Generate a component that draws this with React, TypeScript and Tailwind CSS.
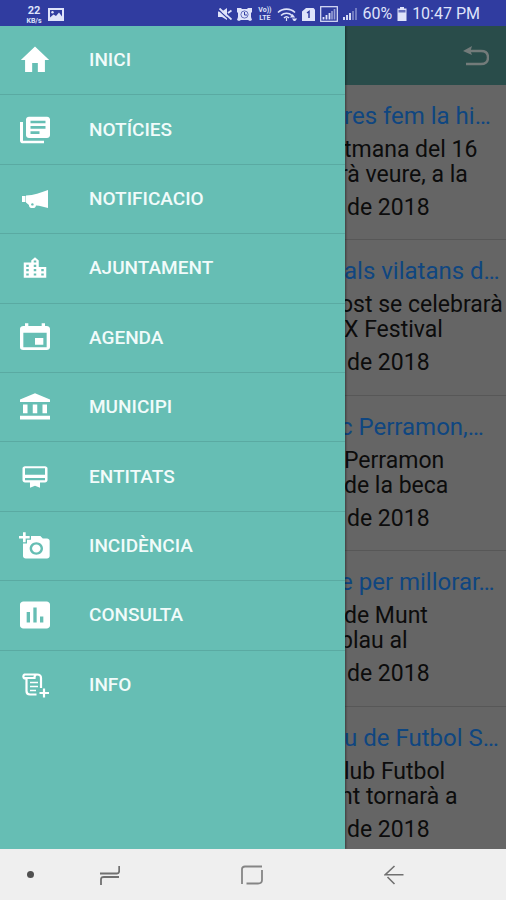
import type { ReactNode } from "react";
import {
  MdAccountBalance,
  MdAddAPhoto,
  MdAssessment,
  MdCardMembership,
  MdEvent,
  MdHome,
  MdLibraryBooks,
  MdLocationCity,
} from "react-icons/md";

function Megaphone() {
  return (
    <svg viewBox="0 0 26 18" className="h-[18px] w-[26px]" fill="currentColor" aria-hidden="true">
      <path d="M0 6h3.500v6H0zM4 5.600C12 5 18 3 26 0v18c-4-1.200-8-2.200-12-2.500A3.500 3 0 0 1 7 15L4 12.500z" />
      <circle cx="10.400" cy="14.400" r="1.200" className="fill-[#66beb4]" />
    </svg>
  );
}

function ScrollPlus() {
  return (
    <svg viewBox="0 0 28 25" className="h-[25px] w-7" fill="none" stroke="currentColor" strokeWidth="2.200" aria-hidden="true">
      <path d="M4.500 5.500H3.500a2 2.200 0 0 1 0-4H16c2.500 0 4 1 4 3.500V15M3 5h10.500c0-2 .5-3.500 2.500-3.500M5.500 5.500V18c0 2.500 1 3.500 3.500 3.500h6.500" />
      <path d="M9 9.500h8M9 13.500h8M9 17.500h6" strokeWidth="1.600" />
      <path d="M23 15.500v9M18.500 20H28" />
    </svg>
  );
}

const stretch = { preserveAspectRatio: "none", "aria-hidden": true } as const;

const menu: { label: string; icon: ReactNode }[] = [
  { label: "INICI", icon: <MdHome {...stretch} className="h-9 w-[34px]" /> },
  { label: "NOTÍCIES", icon: <MdLibraryBooks {...stretch} className="h-8 w-9" /> },
  { label: "NOTIFICACIO", icon: <Megaphone /> },
  { label: "AJUNTAMENT", icon: <MdLocationCity {...stretch} className="h-[26px] w-[30px]" /> },
  { label: "AGENDA", icon: <MdEvent {...stretch} className="h-8 w-10" /> },
  { label: "MUNICIPI", icon: <MdAccountBalance {...stretch} className="h-[30px] w-9" /> },
  { label: "ENTITATS", icon: <MdCardMembership {...stretch} className="h-[26px] w-[30px]" /> },
  { label: "INCIDÈNCIA", icon: <MdAddAPhoto {...stretch} className="h-[30px] w-8" /> },
  { label: "CONSULTA", icon: <MdAssessment {...stretch} className="h-9 w-10" /> },
  { label: "INFO", icon: <ScrollPlus /> },
];

const near = "pl-[344px]";
const under = "pl-[340px]";

const news = [
  { title: "res fem la hi…", titlePad: near, lines: [["tmana del 16", near], ["rà veure, a la", under]] },
  { title: "als vilatans d…", titlePad: near, lines: [["ost se celebrarà", under], ["X Festival", near]] },
  { title: "c Perramon,…", titlePad: under, lines: [["Perramon", near], ["de la beca", near]] },
  { title: "e per millorar…", titlePad: under, lines: [["de Munt", near], ["blau al", under]] },
  { title: "u de Futbol S…", titlePad: near, lines: [["lub Futbol", near], ["nt tornarà a", under]] },
];

function StatusBar() {
  return (
    <header className="flex h-[26px] shrink-0 items-center bg-[#303ca0] pt-[2px] pr-[26px] pl-[25px] text-[#dfe3fa]">
      <div className="w-[18px] text-center font-bold">
        <div className="text-[11px] leading-[13px]">22</div>
        <div className="text-[7px] leading-[8px]">KB/s</div>
      </div>
      <svg viewBox="0 0 16 13" className="ml-[5px] h-[13px] w-4" aria-hidden="true">
        <rect x="1" y="1" width="14" height="11" fill="none" stroke="currentColor" strokeWidth="2" />
        <path d="M2 11V9.500l3.500-3L8 8l3-3.500 3 4V11z" fill="currentColor" />
        <circle cx="4.500" cy="4.200" r="1.200" fill="currentColor" />
      </svg>
      <div className="ml-auto flex items-center gap-[5px]">
        <svg viewBox="0 0 14 12" className="h-3 w-[14px]" aria-hidden="true">
          <path d="M0 3.500h4L9 0v12L4 9H0z" fill="currentColor" />
          <path d="M0 1.500L12 12.500" stroke="#303ca0" strokeWidth="1.200" />
          <path d="M1.500 .5L13.500 11.500M10 5l3.500-2.500" stroke="currentColor" strokeWidth="1.800" />
        </svg>
        <svg viewBox="0 0 15 13" className="h-[13px] w-[15px]" aria-hidden="true">
          <path d="M0 0h4l1 1h5l1-1h4v4l-1 1v4l1 3-2 1-2-1H4l-2 1-2-1 1-3V5L0 4z" fill="currentColor" />
          <circle cx="7.500" cy="6.500" r="3.600" fill="none" stroke="#303ca0" strokeWidth=".7" />
          <path d="M7.500 4v3H10" fill="none" stroke="#303ca0" />
        </svg>
        <div className="w-[15px] text-center text-[7px] leading-[8px] font-bold">
          <div>Vo))</div>
          <div>LTE</div>
        </div>
        <svg viewBox="0 0 20 13" className="h-[13px] w-5" fill="none" stroke="currentColor" strokeWidth="1.600" aria-hidden="true">
          <path d="M1 4.500c4.500-4.500 12.500-4.500 17 0M4 7.500c3-3 8-3 11 0M7 10c1.500-1.500 3.500-1.500 5 0" />
          <path d="M9.500 10v3M14 9l1.500-2L17 9zM16 11l1.500 2L19 11z" strokeWidth="1.200" fill="currentColor" />
        </svg>
        <svg viewBox="0 0 13 13" className="h-[13px] w-[13px]" aria-hidden="true">
          <path d="M4 0h7.500L13 1.500V13H0V3.500z" fill="currentColor" />
          <path d="M5 5l2-1.500V10" fill="none" stroke="#303ca0" strokeWidth="1.500" />
        </svg>
        <svg viewBox="0 0 18 16" className="h-4 w-[18px]" aria-hidden="true">
          <rect x=".7" y=".7" width="16.600" height="14.600" fill="none" stroke="currentColor" strokeWidth="1.200" />
          <path d="M3.500 11v2.500M6.500 9v4.500M9.500 7v6.500" stroke="currentColor" strokeWidth="1.800" />
          <path d="M12 5v8.500M14.500 3v10.500" stroke="currentColor" strokeWidth="1.600" opacity=".6" />
        </svg>
        <svg viewBox="0 0 14 12" className="h-3 w-[14px]" stroke="currentColor" aria-hidden="true">
          <path d="M1 9v3M4 7v5M7 5v7" strokeWidth="1.900" />
          <path d="M10 3v9M13 0v12" strokeWidth="1.500" opacity=".5" />
        </svg>
        <span className="text-[16px] leading-5">60%</span>
        <svg viewBox="0 0 10 14" className="h-[14px] w-[10px]" fill="currentColor" aria-hidden="true">
          <path d="M3 0h4v1.500h2.500V14h-9V1.500H3z" />
          <path d="M1.500 3h7v2.500h-7z" fill="#303ca0" opacity=".7" />
        </svg>
        <span className="text-[16px] leading-5">10:47 PM</span>
      </div>
    </header>
  );
}

function NavBar() {
  return (
    <nav aria-label="Sistema" className="flex h-[51px] shrink-0 items-center bg-[#efefef] pl-[27px] text-[#707070]">
      <span className="size-[7px] rounded-full bg-[#505050]" />
      <button type="button" aria-label="Recents" className="ml-[66px]">
        <svg viewBox="0 0 20 20" className="size-5" fill="none" stroke="currentColor" strokeWidth="1.800">
          <path d="M0 8.500h17c2 0 2.200-1 2.200-2.500V1M19 12H4c-2.200 0-3 .8-3 2.500V20" />
        </svg>
      </button>
      <button type="button" aria-label="Pantalla inicial" className="ml-[121px]">
        <svg viewBox="0 0 22 20" className="h-5 w-[22px]" fill="none" stroke="#858585" strokeWidth="1.800">
          <path d="M21 1.500H4c-2 0-3 .8-3 2.500v15M5.500 18.500H17c2.500 0 4-1 4-3.500V5" />
        </svg>
      </button>
      <button type="button" aria-label="Enrere" className="ml-[121px]">
        <svg viewBox="0 0 20 20" className="size-5" fill="none" stroke="currentColor" strokeWidth="1.600">
          <path d="M10.500 1L1 9.800h18.500M3.500 12l7 7" />
        </svg>
      </button>
    </nav>
  );
}

export default function App() {
  return (
    <div className="flex h-screen flex-col overflow-hidden font-[Roboto,sans-serif]">
      <StatusBar />
      <div className="relative min-h-0 flex-1 overflow-hidden bg-[#656565]">
        <div className="flex h-[59px] items-center justify-end bg-[#294c4a] pr-[17px]">
          <button type="button" aria-label="Torna" className="text-[#737b7a]">
            <svg viewBox="0 0 26 20" className="h-5 w-[26px]" fill="none" stroke="currentColor" strokeWidth="2.400">
              <path d="M5 5h13c4 0 7 2 7 6.500S22 18 18 18H3" />
              <path d="M0 5l9-5-1.500 5L9 9z" fill="currentColor" stroke="none" />
            </svg>
          </button>
        </div>
        <main className="grid h-[777px] auto-rows-fr">
          {news.map((item) => (
            <article
              key={item.title}
              className="flex flex-col border-b border-[#575757] pt-[18px] text-[23px] leading-[25px] whitespace-nowrap text-[#0c0c0c]"
            >
              <h2 className={`mb-2 text-[24px] leading-[26px] text-[#0f4680] ${item.titlePad}`}>{item.title}</h2>
              {item.lines.map(([text, pad]) => (
                <p key={text} className={pad}>
                  {text}
                </p>
              ))}
              <time className="mt-2 pl-[347px]">de 2018</time>
            </article>
          ))}
        </main>
        <aside className="absolute inset-y-0 left-0 w-[345px] bg-[#66beb4] shadow-[1px_0_2px_rgba(0,0,0,0.4)]">
          <ul className="grid h-[694px] auto-rows-fr">
            {menu.map(({ label, icon }) => (
              <li key={label} className="border-b border-[#5aaaa2] last:border-b-0">
                <a href="#" className="flex h-full items-center text-[19px] leading-6 font-medium text-[#f1fbfa]">
                  <span className="flex w-[70px] shrink-0 justify-center text-white">{icon}</span>
                  <span className="pl-[19px]">{label}</span>
                </a>
              </li>
            ))}
          </ul>
        </aside>
      </div>
      <NavBar />
    </div>
  );
}
